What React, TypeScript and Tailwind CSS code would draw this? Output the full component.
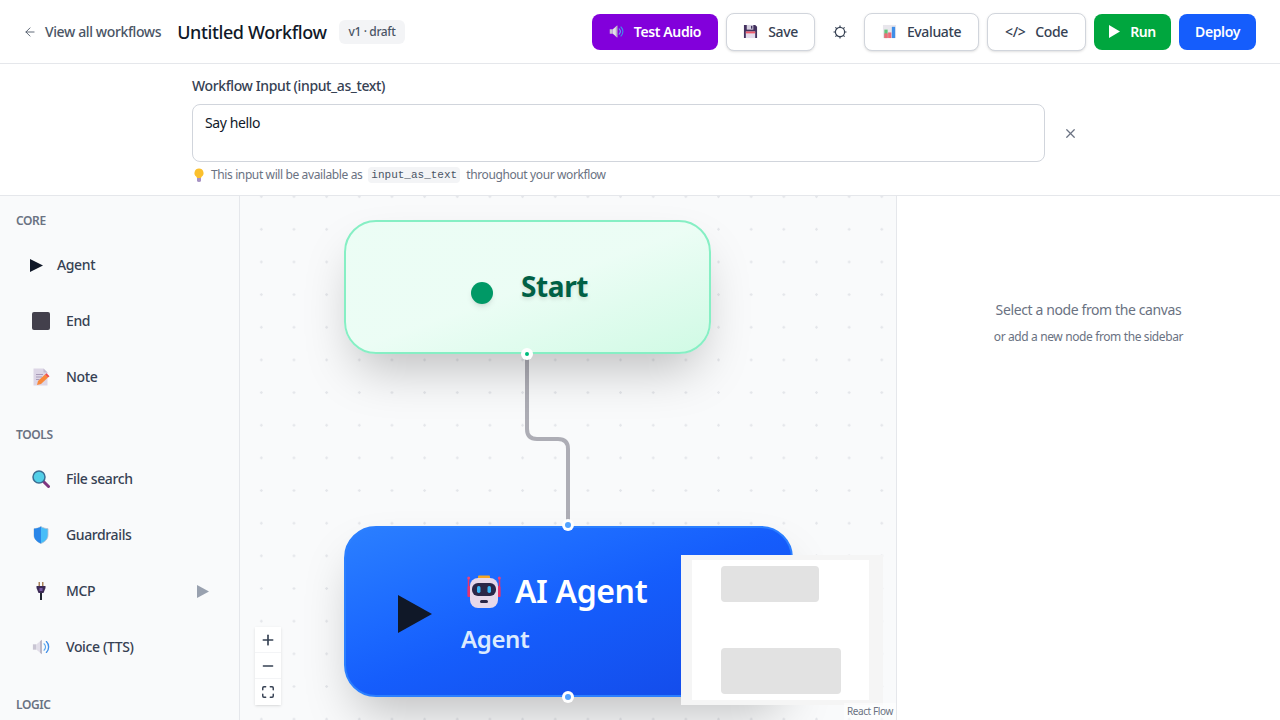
import { ArrowLeft, Maximize, Minus, Plus, X } from 'lucide-react';
import type { ReactNode } from 'react';

function SpeakerIcon({ size = 18 }: { size?: number }) {
  return (
    <svg width={size} height={size} viewBox="0 0 20 20">
      <path d="M1 7h4v6H1z" fill="#c9c5d3" />
      <path d="M5 7l6-5v16l-6-5z" fill="#e2dee9" />
      <path d="M9 3.500l2-1.500v16l-2-1.500z" fill="#b7b3c2" />
      <path d="M13.500 6.500a5 5 0 0 1 0 7" fill="none" stroke="#5aa7f0" strokeWidth="1.500" strokeLinecap="round" />
      <path d="M16 4a8.500 8.500 0 0 1 0 12" fill="none" stroke="#3f8ee8" strokeWidth="1.500" strokeLinecap="round" />
    </svg>
  );
}

function FloppyIcon() {
  return (
    <svg width="15" height="15" viewBox="0 0 16 16">
      <path d="M1 1h12l2 2v12H1z" fill="#44325f" />
      <path d="M4 1h7v5H4z" fill="#d8d2e2" />
      <path d="M8.500 2h1.500v3H8.500z" fill="#44325f" />
      <path d="M3 8h10v7H3z" fill="#e4dcec" />
      <path d="M3 8h10v2H3z" fill="#ef5a6a" />
    </svg>
  );
}

function ChartIcon() {
  return (
    <svg width="15" height="15" viewBox="0 0 16 16">
      <path d="M1 1h14v14H1z" fill="#e8e6ec" />
      <path d="M2.500 6H6v9H2.500z" fill="#62c37a" />
      <path d="M2.500 10H6v5H2.500z" fill="#ef6a78" />
      <path d="M6.500 9h3.500v6H6.500z" fill="#ef6a78" />
      <path d="M10.500 3H14v12h-3.500z" fill="#3f8ee8" />
    </svg>
  );
}

function GearIcon() {
  return (
    <svg width="16" height="16" viewBox="0 0 16 16" fill="none" stroke="#364153" strokeWidth="1.200">
      <circle cx="8" cy="8" r="4.600" />
      <path d="M8 1.500v1.800M8 12.700v1.800M1.500 8h1.800M12.700 8h1.800M3.400 3.400l1.300 1.300M11.300 11.300l1.300 1.300M3.400 12.600l1.300-1.300M11.300 4.700l1.300-1.300" />
    </svg>
  );
}

function BulbIcon() {
  return (
    <svg width="12" height="14" viewBox="0 0 12 14">
      <path d="M6 .5a4.500 4.500 0 0 0-2.600 8.200L4 10h4l.6-1.300A4.500 4.500 0 0 0 6 .5z" fill="#fbc02d" />
      <path d="M4 10h4v2.500a2 1.500 0 0 1-4 0z" fill="#a793c4" />
    </svg>
  );
}

function NoteIcon() {
  return (
    <svg width="18" height="18" viewBox="0 0 18 18">
      <path d="M1.500 .5h10l4 4v13h-14z" fill="#ddd6e6" />
      <path d="M11.500 .5l4 4h-4z" fill="#c2bacf" />
      <path d="M4 6h7v1H4zM4 8.500h6v1H4zM4 11h3.500v1H4z" fill="#a99bb8" />
      <path d="M5 17l1-4 7-6.500 3 3-7 6.500z" fill="#f9883a" />
      <path d="M13 6.500l1.500-1.300 3 3-1.500 1.300z" fill="#ef4b4b" />
    </svg>
  );
}

function SearchIcon() {
  return (
    <svg width="18" height="18" viewBox="0 0 18 18">
      <path d="M11 11l5.500 5.500" stroke="#80367f" strokeWidth="3" strokeLinecap="round" />
      <circle cx="7" cy="7" r="6" fill="#52cfe8" stroke="#3a6d92" strokeWidth="1.500" />
    </svg>
  );
}

function ShieldIcon() {
  return (
    <svg width="16" height="18" viewBox="0 0 16 18">
      <path d="M8 .5c2 1.400 4.300 2 7 2.200V9c0 4-2.800 6.800-7 8.500C3.800 15.800 1 13 1 9V2.700C3.700 2.500 6 1.900 8 .5z" fill="#47bdf8" stroke="#b6bfd0" strokeWidth=".8" />
      <path d="M8 .5V17.500C3.800 15.800 1 13 1 9V2.700C3.700 2.500 6 1.900 8 .5z" fill="#2a86e8" />
    </svg>
  );
}

function PlugIcon() {
  return (
    <svg width="10" height="18" viewBox="0 0 10 18">
      <path d="M2.500 0h1.500v4H2.500zM6 0h1.500v4H6z" fill="#a9825a" />
      <path d="M.5 4h9v2l-2 5h-5l-2-5z" fill="#3c2a55" />
      <path d="M3.500 6h3v3h-3z" fill="#7c5da8" />
      <path d="M4 11h2v7H4z" fill="#1f2430" />
    </svg>
  );
}

function RobotIcon() {
  return (
    <svg width="34" height="34" viewBox="0 0 34 34">
      <path d="M11 2.500q0-1 1-1h10q1 0 1 1V4H11z" fill="#f5a623" />
      <path d="M1.500 5v18M32.500 5v18" stroke="#e8336d" strokeWidth="1.500" />
      <circle cx="1.700" cy="4" r="1.500" fill="#f04078" />
      <circle cx="32.300" cy="4" r="1.500" fill="#f04078" />
      <rect x=".5" y="12" width="3.500" height="11" rx="1.500" fill="#e8336d" />
      <rect x="30" y="12" width="3.500" height="11" rx="1.500" fill="#e8336d" />
      <rect x="3" y="4" width="28" height="30" rx="8" fill="#e6d8ea" />
      <rect x="5" y="9" width="24" height="13" rx="6" fill="#2a2748" />
      <rect x="10" y="12" width="3.500" height="7" rx="1.700" fill="#38b6f5" />
      <rect x="20.500" y="12" width="3.500" height="7" rx="1.700" fill="#38b6f5" />
      <rect x="13" y="26" width="8" height="3" rx="1.500" fill="#2a2748" />
    </svg>
  );
}

function HeaderButton({ children, className }: { children: ReactNode; className: string }) {
  return (
    <button className={`flex items-center justify-center gap-2.5 rounded-lg text-sm ${className}`}>{children}</button>
  );
}

function PaletteItem({ icon, label, extra }: { icon: ReactNode; label: string; extra?: ReactNode }) {
  return (
    <div className="flex h-14 items-center gap-3.5 pr-[14px] pl-[14px] text-sm font-medium text-gray-700">
      {icon}
      <span className="flex-1">{label}</span>
      {extra}
    </div>
  );
}

function IconBox({ children }: { children: ReactNode }) {
  return <span className="flex w-[22px] items-center justify-center">{children}</span>;
}

function Heading({ label }: { label: string }) {
  return <div className="text-xs leading-4 font-semibold text-gray-500 uppercase">{label}</div>;
}

export default function App() {
  return (
    <div className="flex h-screen flex-col overflow-hidden bg-white font-['Noto_Sans',sans-serif] tracking-[-0.024em] text-gray-900">
      {/* Top bar */}
      <header className="flex h-16 shrink-0 items-center justify-between border-b border-gray-200 pr-6 pl-[23px]">
        <div className="flex items-center gap-4">
          <div className="flex items-center gap-2 text-sm font-medium text-gray-600">
            <ArrowLeft size={14} strokeWidth={1.500} />
            <span>View all workflows</span>
          </div>
          <h1 className="text-lg font-medium">Untitled Workflow</h1>
          <span className="ml-[-4px] rounded-md bg-gray-100 px-2.5 py-1 text-xs font-medium text-gray-600">v1 · draft</span>
        </div>
        <div className="flex items-center gap-2">
          <HeaderButton className="h-9 w-[126px] bg-purple-700 font-semibold text-white">
            <SpeakerIcon size={15} />
            Test Audio
          </HeaderButton>
          <HeaderButton className="h-[38px] w-[89px] border border-gray-300 bg-white font-medium text-gray-700 shadow-sm">
            <FloppyIcon />
            Save
          </HeaderButton>
          <button className="flex w-[33px] items-center justify-center">
            <GearIcon />
          </button>
          <HeaderButton className="h-[38px] w-[115px] border border-gray-300 bg-white font-medium text-gray-700 shadow-sm">
            <ChartIcon />
            Evaluate
          </HeaderButton>
          <HeaderButton className="h-[38px] w-[99px] border border-gray-300 bg-white font-medium text-gray-700 shadow-sm">
            <span>&lt;/&gt;</span>
            Code
          </HeaderButton>
          <HeaderButton className="h-9 w-[77px] bg-green-600 font-semibold text-white">
            <svg width="11" height="13" viewBox="0 0 11 13">
              <path d="M0 0l11 6.500L0 13z" fill="currentColor" />
            </svg>
            Run
          </HeaderButton>
          <HeaderButton className="h-9 w-[77px] bg-blue-600 font-semibold text-white">Deploy</HeaderButton>
        </div>
      </header>

      {/* Workflow input */}
      <section className="flex h-[132px] shrink-0 justify-center border-b border-gray-200 pt-3">
        <div className="w-[896px]">
          <label className="block text-sm leading-5 font-medium text-gray-700">Workflow Input (input_as_text)</label>
          <div className="mt-2 flex items-center gap-[18px]">
            <div className="h-[58px] flex-1 rounded-lg border border-gray-300 px-3 py-2 text-sm leading-5">Say hello</div>
            <X size={15} className="mr-[10px] text-gray-500" />
          </div>
          <div className="mt-[5px] flex items-center gap-1.5 text-xs leading-4 text-gray-500">
            <span className="ml-[1px]">
              <BulbIcon />
            </span>
            <span>This input will be available as</span>
            <code className="rounded bg-gray-100 px-[3px] font-['Liberation_Mono',monospace] text-[11px] tracking-normal text-gray-600">input_as_text</code>
            <span>throughout your workflow</span>
          </div>
        </div>
      </section>

      <div className="flex min-h-0 flex-1">
        {/* Node palette */}
        <aside className="w-60 shrink-0 overflow-hidden border-r border-gray-200 bg-gray-50 pt-[17px] pl-4">
          <Heading label="Core" />
          <div className="mt-2">
            <PaletteItem
              icon={
                <svg width="13" height="13" viewBox="0 0 13 13">
                  <path d="M0 0l13 6.500L0 13z" fill="#101828" />
                </svg>
              }
              label="Agent"
            />
            <PaletteItem
              icon={
                <IconBox>
                  <span className="block size-[18px] rounded-[2px] bg-[#43404c]" />
                </IconBox>
              }
              label="End"
            />
            <PaletteItem icon={<IconBox><NoteIcon /></IconBox>} label="Note" />
          </div>
          <div className="mt-[22px]">
            <Heading label="Tools" />
          </div>
          <div className="mt-2">
            <PaletteItem icon={<IconBox><SearchIcon /></IconBox>} label="File search" />
            <PaletteItem icon={<IconBox><ShieldIcon /></IconBox>} label="Guardrails" />
            <div className="pr-4">
              <PaletteItem
                icon={<IconBox><PlugIcon /></IconBox>}
                label="MCP"
                extra={
                  <svg width="12" height="13" viewBox="0 0 12 13">
                    <path d="M0 0l12 6.500L0 13z" fill="#99a1af" />
                  </svg>
                }
              />
            </div>
            <PaletteItem icon={<IconBox><SpeakerIcon /></IconBox>} label="Voice (TTS)" />
          </div>
          <div className="mt-[22px]">
            <Heading label="Logic" />
          </div>
        </aside>

        {/* Canvas */}
        <main className="relative w-[656px] shrink-0 overflow-hidden bg-gray-50 bg-[radial-gradient(#e4e6ea_1px,transparent_1.500px)] bg-[size:32.670px_32.670px] bg-[position:5px_-15.700px]">
          <svg className="absolute inset-0 h-full w-full">
            <path d="M287 160V233Q287 243 297 243H318Q328 243 328 253V330" fill="none" stroke="#adadb5" strokeWidth="4" />
          </svg>

          {/* Start node */}
          <div className="absolute top-6 left-[104px] flex h-[134px] w-[367px] items-center rounded-[32px] border-2 border-[#86efc4] bg-gradient-to-br from-emerald-50 via-emerald-50 to-emerald-100 pl-[125px] shadow-2xl">
            <span className="mt-3 size-[22px] rounded-full bg-emerald-600 shadow-md" />
            <span className="-mt-[2px] ml-[28px] text-[28px] font-bold text-emerald-800 [text-shadow:0_2px_4px_rgba(0,0,0,0.12)]">Start</span>
          </div>
          <span className="absolute top-[152px] left-[281px] flex size-3 items-center justify-center rounded-full bg-white">
            <span className="size-1 rounded-full bg-emerald-500" />
          </span>

          {/* Agent node */}
          <div className="absolute top-[330px] left-[104px] flex h-[171px] w-[449px] items-center rounded-[32px] border-2 border-blue-500 bg-gradient-to-br from-blue-500 via-blue-600 to-blue-700 pl-[52px] shadow-2xl">
            <svg width="34" height="38" viewBox="0 0 34 38" className="mt-1 shrink-0">
              <path d="M0 0l34 19L0 38z" fill="#101828" />
            </svg>
            <div className="mt-[2px] ml-[29px]">
              <div className="ml-[6px] flex items-center gap-[14px]">
                <RobotIcon />
                <span className="text-[32px] leading-10 font-semibold text-white">AI Agent</span>
              </div>
              <div className="mt-3 text-2xl leading-8 font-semibold text-blue-100">Agent</div>
            </div>
          </div>
          <span className="absolute top-[323px] left-[322px] flex size-3 items-center justify-center rounded-full bg-white">
            <span className="size-1.5 rounded-full bg-blue-400" />
          </span>
          <span className="absolute top-[495px] left-[322px] flex size-3 items-center justify-center rounded-full bg-white">
            <span className="size-1.5 rounded-full bg-blue-400" />
          </span>

          {/* Flow controls */}
          <div className="absolute top-[431px] left-[15px] flex w-[26px] flex-col bg-white text-gray-700 shadow-sm">
            <span className="flex h-[26px] items-center justify-center border-b border-gray-100"><Plus size={16} strokeWidth={2.500} /></span>
            <span className="flex h-[26px] items-center justify-center border-b border-gray-100"><Minus size={16} strokeWidth={2} /></span>
            <span className="flex h-[26px] items-center justify-center"><Maximize size={14} strokeWidth={2.500} /></span>
          </div>

          {/* Mini map */}
          <div className="absolute top-[359px] left-[441px] flex h-[150px] w-[202px] bg-[#f5f5f5]">
            <div className="mt-[5px] ml-[11px] h-[140px] w-[177px] bg-white pt-[6px] pl-[29px]">
              <div className="h-9 w-[98px] rounded-sm bg-[#e2e2e2]" />
              <div className="mt-[46px] h-[46px] w-[120px] rounded-sm bg-[#e2e2e2]" />
            </div>
          </div>

          <span className="absolute right-0 bottom-0 bg-white/50 px-[3px] text-[10px] leading-[17px] text-gray-500">React Flow</span>
        </main>

        {/* Inspector */}
        <aside className="flex-1 border-l border-gray-200 bg-white pt-[104px] text-center">
          <p className="text-sm leading-5 text-gray-500">Select a node from the canvas</p>
          <p className="mt-[9px] text-xs leading-4 text-gray-500">or add a new node from the sidebar</p>
        </aside>
      </div>
    </div>
  );
}
